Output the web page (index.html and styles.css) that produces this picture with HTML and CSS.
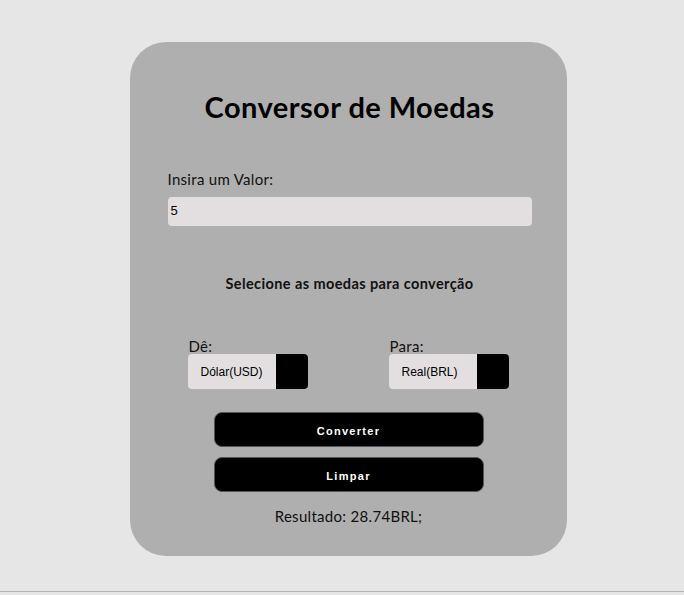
FILE: index.html
```html
<!DOCTYPE html>
<html lang="pt-BR">
<head>
<meta charset="utf-8">
<title>Conversor de Moedas</title>
<link rel="stylesheet" href="styles.css">
</head>
<body>
<div class="page">
  <main class="card">
    <h1 class="title">Conversor de Moedas</h1>
    <label class="label" for="valor">Insira um Valor:</label>
    <div class="input">5</div>
    <h2 class="subtitle">Selecione as moedas para converção</h2>
    <div class="selects">
      <div class="field">
        <span class="label small">Dê:</span>
        <div class="select"><span class="select-text">Dólar(USD)</span><span class="select-arrow"></span></div>
      </div>
      <div class="field">
        <span class="label small">Para:</span>
        <div class="select"><span class="select-text">Real(BRL)</span><span class="select-arrow"></span></div>
      </div>
    </div>
    <div class="buttons">
      <button class="btn">Converter</button>
      <button class="btn">Limpar</button>
    </div>
    <p class="result">Resultado: 28.74BRL;</p>
  </main>
</div>
</body>
</html>
```
FILE: styles.css
```css
html, body {
  margin: 0;
  padding: 0;
  background: #e6e6e6;
}
.page {
  height: 592px;
  border-bottom: 1px solid #b4b4b4;
  box-sizing: border-box;
  padding-top: 42px;
  display: flex;
  justify-content: center;
  padding-left: 12px;
}
.card {
  width: 437px;
  height: 514px;
  background: #afafaf;
  border-radius: 36px;
  box-sizing: border-box;
  padding: 0 35px 0 38px;
  display: flex;
  flex-direction: column;
  font-family: Lato, "Open Sans", sans-serif;
  color: #000;
}
.title {
  margin: 48px 0 0;
  font-size: 29px;
  font-weight: 700;
  text-align: center;
  line-height: 34px;
  letter-spacing: 0.45px;
}
.label {
  font-size: 15px;
  line-height: 18px;
  color: #111;
  letter-spacing: 0.3px;
}
.card > .label {
  margin-top: 46px;
}
.input {
  margin-top: 9px;
  height: 29px;
  background: #e3dfe0;
  border-radius: 4px;
  font-family: "Liberation Sans", Arial, sans-serif;
  font-size: 13px;
  line-height: 28px;
  padding-left: 3px;
}
.subtitle {
  margin: 49px 0 0;
  font-size: 14.5px;
  font-weight: 700;
  text-align: center;
  line-height: 18px;
  color: #111;
  letter-spacing: 0.4px;
}
.selects {
  margin-top: 45px;
  display: flex;
  padding-left: 20px;
  gap: 81px;
}
.field {
  display: flex;
  flex-direction: column;
}
.label.small {
  padding-left: 1px;
  line-height: 16px;
}
.select {
  width: 120px;
  height: 35px;
  border-radius: 4px;
  overflow: hidden;
  display: flex;
  background: #e3dfe0;
}
.select-text {
  flex: 1;
  font-family: "Liberation Sans", Arial, sans-serif;
  font-size: 12px;
  line-height: 36px;
  padding-left: 13px;
}
.select-arrow {
  width: 32px;
  background: #000;
}
.buttons {
  margin-top: 23px;
  display: flex;
  flex-direction: column;
  align-items: center;
  gap: 10px;
}
.btn {
  width: 270px;
  height: 35px;
  background: #000;
  color: #fff;
  border: 1px solid #555;
  border-radius: 8px;
  font-family: "Liberation Sans", Arial, sans-serif;
  font-size: 11px;
  font-weight: 700;
  letter-spacing: 1.3px;
  padding: 3px 0 0;
  margin-right: 2px;
}
.result {
  margin: 14px 0 0;
  text-align: center;
  font-size: 15px;
  line-height: 20px;
  color: #111;
  letter-spacing: 0.3px;
  padding-right: 2px;
}
```
